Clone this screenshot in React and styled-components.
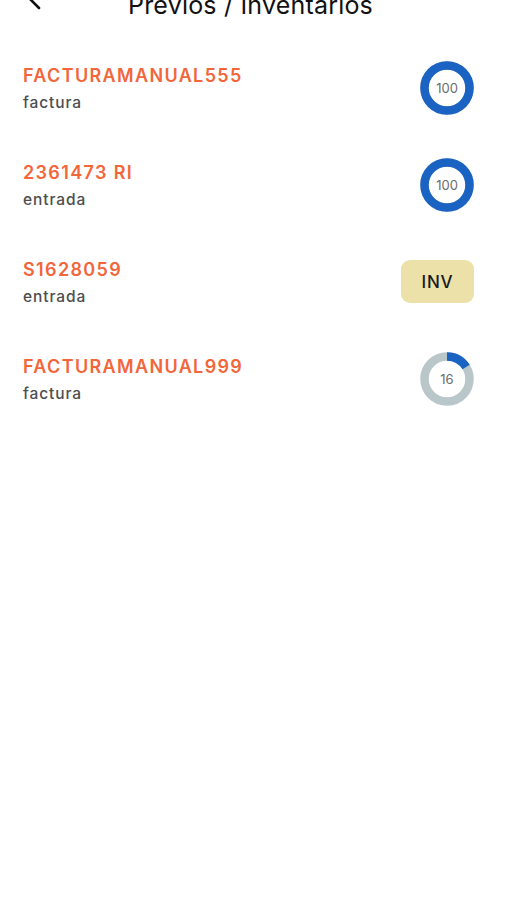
import React from "react";
import styled, { createGlobalStyle } from "styled-components";

const Global = createGlobalStyle`
  html, body { margin: 0; padding: 0; background: #fff; }
  body { font-family: Inter, "Noto Sans", "Liberation Sans", sans-serif; overflow: hidden; }
`;

const Page = styled.div`
  width: 507px;
  height: 900px;
  background: #fff;
  overflow: hidden;
`;

const NavBar = styled.header`
  position: relative;
  height: 44px;
  margin-top: -17px;
  display: flex;
  align-items: center;
  justify-content: center;
`;

const BackButton = styled.button`
  position: absolute;
  left: 18px;
  top: -2px;
  width: 32px;
  height: 32px;
  border: none;
  background: none;
  padding: 0;
  display: flex;
  align-items: center;
  justify-content: center;
`;

const Title = styled.h1`
  margin: 0 0 0 -6px;
  font-size: 25px;
  font-weight: 400;
  color: #111;
  letter-spacing: 0.2px;
  line-height: 44px;
`;

const List = styled.ul`
  list-style: none;
  margin: 12px 0 0;
  padding: 0;
`;

const Row = styled.li`
  height: 97px;
  display: flex;
  align-items: center;
  justify-content: space-between;
  padding: 0 33px 0 23px;
`;

const TextBlock = styled.div`
  display: flex;
  flex-direction: column;
  gap: 5px;
  margin-top: 2px;
`;

const ItemTitle = styled.div`
  color: #f2663a;
  font-size: 18px;
  font-weight: 600;
  letter-spacing: 1.35px;
  line-height: 24px;
`;

const ItemSub = styled.div`
  color: #4d4d4f;
  font-size: 15.5px;
  font-weight: 500;
  letter-spacing: 0.9px;
  line-height: 20px;
`;

const Badge = styled.div`
  width: 73px;
  height: 43px;
  border-radius: 9px;
  background: #ebe1a9;
  color: #1a1a1a;
  font-size: 17px;
  font-weight: 500;
  letter-spacing: 0.8px;
  display: flex;
  align-items: center;
  justify-content: center;
`;

const DonutWrap = styled.div`
  position: relative;
  width: 54px;
  height: 54px;
`;

const DonutLabel = styled.span`
  position: absolute;
  inset: 0;
  display: flex;
  align-items: center;
  justify-content: center;
  font-size: 13px;
  color: #6b6b6b;
`;

function Donut({ value }) {
  const r = 22.5;
  const c = 2 * Math.PI * r;
  const pct = Math.min(100, value) / 100;
  return (
    <DonutWrap>
      <svg width="54" height="54" viewBox="0 0 54 54">
        <circle cx="27" cy="27" r={r} fill="none" stroke="#b9c6ca" strokeWidth="8.5" />
        <circle
          cx="27"
          cy="27"
          r={r}
          fill="none"
          stroke="#1a63c2"
          strokeWidth="8.5"
          strokeDasharray={`${c * pct} ${c}`}
          transform="rotate(-90 27 27)"
        />
      </svg>
      <DonutLabel>{value}</DonutLabel>
    </DonutWrap>
  );
}

const items = [
  { title: "FACTURAMANUAL555", sub: "factura", type: "donut", value: 100 },
  { title: "2361473 RI", sub: "entrada", type: "donut", value: 100 },
  { title: "S1628059", sub: "entrada", type: "badge", label: "INV" },
  { title: "FACTURAMANUAL999", sub: "factura", type: "donut", value: 16 },
];

export default function App() {
  return (
    <Page>
      <Global />
      <NavBar>
        <BackButton aria-label="Atrás">
          <svg width="20" height="28" viewBox="0 0 20 28">
            <path d="M15 3 L4 14 L15 25" fill="none" stroke="#111" strokeWidth="2.6" strokeLinecap="round" strokeLinejoin="round" />
          </svg>
        </BackButton>
        <Title>Previos / Inventarios</Title>
      </NavBar>
      <List>
        {items.map((it) => (
          <Row key={it.title}>
            <TextBlock>
              <ItemTitle>{it.title}</ItemTitle>
              <ItemSub>{it.sub}</ItemSub>
            </TextBlock>
            {it.type === "badge" ? <Badge>{it.label}</Badge> : <Donut value={it.value} />}
          </Row>
        ))}
      </List>
    </Page>
  );
}
